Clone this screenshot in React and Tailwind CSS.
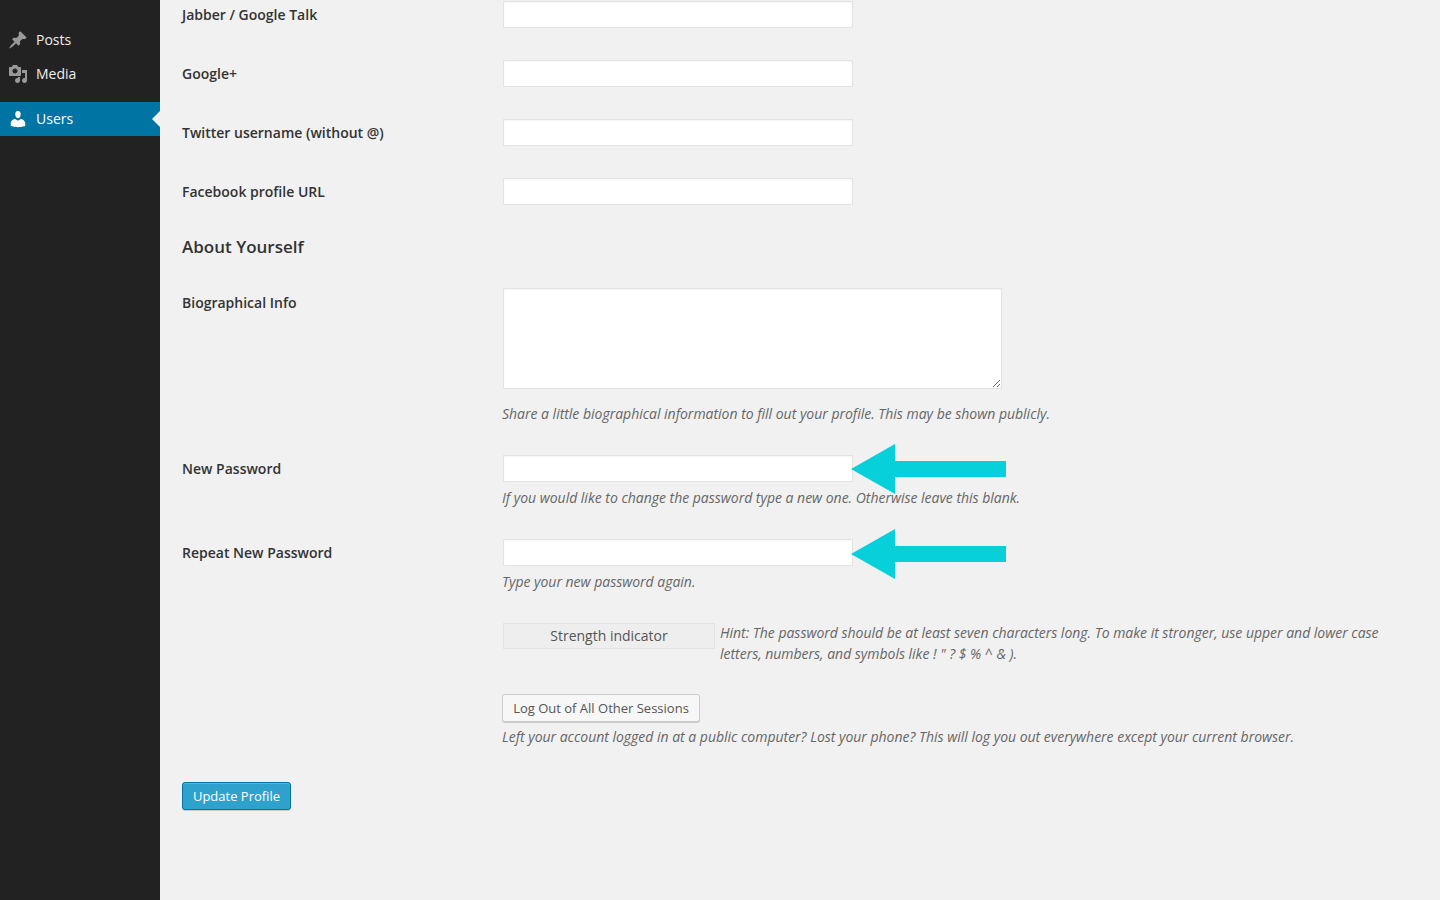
const pin = "M10.44 3.02l1.82-1.82 6.36 6.35-1.83 1.82c-1.05-.68-2.48-.57-3.41.36l-.75.75c-.92.93-1.04 2.35-.35 3.41l-1.83 1.82-2.41-2.41-2.8 2.79c-.42.42-3.38 2.71-3.8 2.29s1.86-3.39 2.28-3.81l2.79-2.79L4.1 9.36l1.83-1.82c1.05.69 2.48.57 3.41-.36l.75-.75c.93-.92 1.04-2.35.35-3.41z";
const media = "M13 11V4c0-.55-.45-1-1-1h-1.67L9 1H5L3.67 3H2c-.55 0-1 .45-1 1v7c0 .55.45 1 1 1h10c.55 0 1-.45 1-1zM7 4.5c1.38 0 2.5 1.12 2.5 2.5S8.38 9.5 7 9.5 4.5 8.38 4.5 7 5.62 4.5 7 4.5zM14 6h5v10.5c0 1.38-1.12 2.5-2.5 2.5S14 17.88 14 16.5s1.12-2.5 2.5-2.5c.17 0 .34.02.5.05V9h-3V6zm-4 8.05V13h2v3.5c0 1.38-1.12 2.5-2.5 2.5S7 17.88 7 16.5 8.12 14 9.5 14c.17 0 .34.02.5.05z";
const user = "M10 9.25c-2.27 0-2.73-3.44-2.73-3.44C7 4.02 7.82 2 9.97 2c2.16 0 2.98 2.02 2.71 3.81 0 0-.41 3.44-2.68 3.44zm0 2.57L12.72 10c2.39 0 4.52 2.33 4.52 4.53v2.49s-3.65 1.13-7.24 1.13c-3.65 0-7.24-1.13-7.24-1.13v-2.49c0-2.25 1.94-4.48 4.47-4.48z";

function NavItem({ d, label, active }) {
  return (
    <div className={`relative flex h-[34px] items-center pl-[8px] text-[14px] ${active ? "mt-[11px] bg-[#0074a2] text-white" : "text-[#eeeeee]"}`}>
      <svg viewBox="0 0 20 20" className={`h-[20px] w-[20px] ${active ? "fill-white" : "fill-[#999999]"}`}>
        <path d={d} />
      </svg>
      <span className="mb-[2px] ml-[8px]">{label}</span>
      {active && (
        <span className="absolute right-0 top-[9px] h-0 w-0 border-y-[8px] border-r-[8px] border-y-transparent border-r-[#f1f1f1]" />
      )}
    </div>
  );
}

function Label({ children }) {
  return <div className="w-[320px] shrink-0 text-[14px] font-semibold leading-[20px] text-[#333333]">{children}</div>;
}

function TextInput() {
  return (
    <input
      type="text"
      className="ml-[1px] block h-[27px] w-[350px] border border-[#e3e3e3] bg-white shadow-[inset_0_1px_2px_rgba(0,0,0,0.04)] outline-none"
    />
  );
}

function Desc({ children, className = "" }) {
  return <p className={`text-[14px] italic leading-[21px] tracking-[-0.015px] text-[#666666] ${className}`}>{children}</p>;
}

function SimpleRow({ label }) {
  return (
    <div className="mb-[32px] flex h-[27px] items-center">
      <Label>{label}</Label>
      <TextInput />
    </div>
  );
}

function Arrow({ className }) {
  return (
    <svg viewBox="0 0 156 50" className={`absolute left-[349px] h-[50px] w-[156px] fill-[#07d0da] ${className}`}>
      <path d="M0 25 L44 0 V17 H155 V33 H44 V50 Z" />
    </svg>
  );
}

function PasswordRow({ label, hint, arrowClass, className = "" }) {
  return (
    <div className={`flex ${className}`}>
      <div className="pt-[4px]">
        <Label>{label}</Label>
      </div>
      <div className="relative">
        <TextInput />
        <Desc className="mt-[5px]">{hint}</Desc>
        <Arrow className={arrowClass} />
      </div>
    </div>
  );
}

export default function App() {
  return (
    <div className="flex h-screen overflow-hidden bg-[#f1f1f1] font-['Open_Sans',sans-serif]">
      <aside className="w-[160px] shrink-0 bg-[#222222] pt-[23px]">
        <NavItem d={pin} label="Posts" />
        <NavItem d={media} label="Media" />
        <NavItem d={user} label="Users" active />
      </aside>
      <main className="flex-1 pl-[22px] pt-[1px]">
        <SimpleRow label="Jabber / Google Talk" />
        <SimpleRow label="Google+" />
        <SimpleRow label="Twitter username (without @)" />
        <SimpleRow label="Facebook profile URL" />
        <h2 className="mt-[-2px] h-[24px] text-[17px] font-semibold leading-[24px] text-[#333333]">About Yourself</h2>
        <div className="mt-[29px] flex">
          <div className="pt-[5px]">
            <Label>Biographical Info</Label>
          </div>
          <div>
            <textarea className="ml-[1px] block h-[101px] w-[499px] border border-[#e3e3e3] bg-white shadow-[inset_0_1px_2px_rgba(0,0,0,0.04)] outline-none" />
            <Desc className="mt-[14px]">Share a little biographical information to fill out your profile. This may be shown publicly.</Desc>
          </div>
        </div>
        <PasswordRow
          className="mt-[31px]"
          arrowClass="top-[-11px]"
          label="New Password"
          hint="If you would like to change the password type a new one. Otherwise leave this blank."
        />
        <PasswordRow className="mt-[31px]" arrowClass="top-[-10px]" label="Repeat New Password" hint="Type your new password again." />
        <div className="ml-[320px] mt-[31px] flex">
          <div className="ml-[1px] flex h-[26px] w-[212px] shrink-0 items-center justify-center border border-[#e3e3e3] bg-[#eeeeee] pb-[2px] text-[14px] text-[#555555]">
            Strength indicator
          </div>
          <Desc className="ml-[5px] mt-[-1px] w-[680px]">
            Hint: The password should be at least seven characters long. To make it stronger, use upper and lower case letters, numbers, and symbols like ! " ? $ % ^ &amp; ).
          </Desc>
        </div>
        <div className="ml-[320px] mt-[30px]">
          <button className="block h-[28px] w-[198px] rounded-[3px] border border-[#cccccc] bg-[#f7f7f7] pt-[1px] text-[13px] text-[#555555] shadow-[0_1px_0_#cccccc]">
            Log Out of All Other Sessions
          </button>
          <Desc className="mt-[4px]">Left your account logged in at a public computer? Lost your phone? This will log you out everywhere except your current browser.</Desc>
        </div>
        <button className="mt-[35px] block h-[28px] w-[109px] rounded-[3px] border border-[#0074a2] bg-[#2ea2cc] pt-[1px] text-[13px] text-white shadow-[inset_0_1px_0_rgba(120,200,230,0.5),0_1px_0_rgba(0,0,0,0.15)]">
          Update Profile
        </button>
      </main>
    </div>
  );
}
